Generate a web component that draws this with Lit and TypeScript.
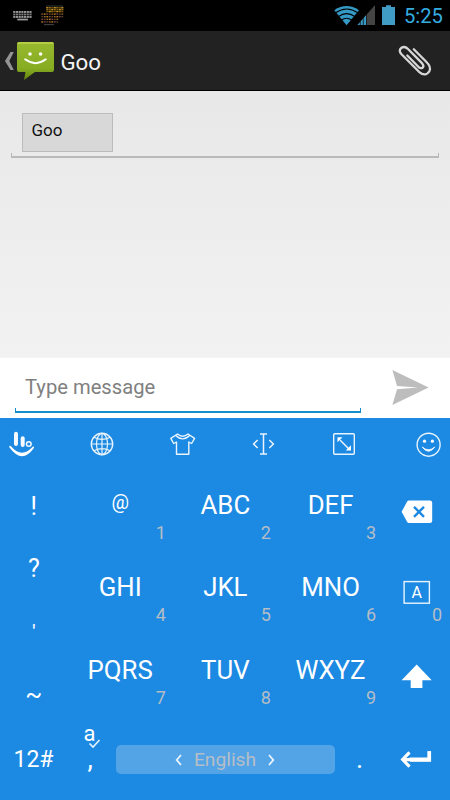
import { LitElement, html, svg, css } from "lit";
import { customElement } from "lit/decorators.js";

const KEYS = [
  ["@", "1"], ["ABC", "2"], ["DEF", "3"],
  ["GHI", "4"], ["JKL", "5"], ["MNO", "6"],
  ["PQRS", "7"], ["TUV", "8"], ["WXYZ", "9"],
];

@customElement("status-bar")
class StatusBar extends LitElement {
  static styles = css`
    :host { display: flex; height: 31px; background: #000; font-family: Roboto, sans-serif; }
    svg { display: block; flex: none; }
    .spacer { flex: 1; }
    .clock { width: 46px; font-size: 20.2px; line-height: 32px; color: #35ace0; }
  `;
  render() {
    const gold = ["#b98a1d", "#8d6912", "#6d5010"];
    const low = ["#8a5c2c", "#b5791b", "#74404a", "#5a3f18"];
    return html`
      <svg width="70" height="31" viewBox="0 0 70 31">
        ${[0, 1, 2].map((r) => Array.from({ length: 7 }, (_, i) =>
          svg`<rect x=${13.2 + i * 2.7} y=${11 + r * 2.5} width="2.2" height="1.9" fill=${r === 1 ? "#777" : "#969696"} />`))}
        <rect x="17.3" y="18.7" width="10.6" height="1.7" fill="#a0a0a0" />
        <rect x="46" y="5.6" width="17" height=".8" fill="#444" />
        ${[0, 1, 2].map((r) => Array.from({ length: 7 }, (_, i) =>
          svg`<rect x=${46.2 + i * 2.5} y=${7 + r * 1.9} width="2.2" height="1.5" fill=${gold[(r + i) % 3]} />`))}
        ${[0, 1, 2, 3].map((r) => Array.from({ length: r < 2 ? 9 : 7 }, (_, i) =>
          svg`<rect x=${41.4 + i * 2.5} y=${13.4 + r * 2.6} width="1.8" height="1.4" fill=${low[(r * 3 + i) % 4]} />`))}
        <rect x="44" y="24" width="10" height="1.2" fill="#3b3b3b" />
      </svg>
      <div class="spacer"></div>
      <svg width="70" height="31" viewBox="334 0 70 31">
        <path d="M334.3 10.2Q346.5 1.8 359 10.2L346.6 25.3z" fill="#3499c4" />
        <g fill="none" stroke="#000" stroke-width="1.1">
          <path d="M335.5 12.8Q346.6 5.2 357.8 12.8M338.5 16.5Q346.6 10.8 354.8 16.5M341.5 20Q346.6 16.4 351.7 20" />
        </g>
        <path d="M357.5 25L375 5V25z" fill="#444" />
        <path d="M357.5 25L366.3 15V25z" fill="#3499c4" />
        <path d="M360.3 20V25M363.3 17V25M366.5 14V25" stroke="#111" stroke-width=".8" />
        <path d="M382 7H386V5.2H391V7H395V25H382z" fill="#419cc5" />
      </svg>
      <div class="clock">5:25</div>
    `;
  }
}

@customElement("conversation-header")
class ConversationHeader extends LitElement {
  static styles = css`
    :host {
      display: flex; box-sizing: border-box; height: 60px; background: #222;
      border-bottom: 1px solid #000; font-family: Roboto, sans-serif;
    }
    svg { display: block; flex: none; }
    .title { flex: 1; font-size: 22.3px; line-height: 63.5px; color: #f3f3f3; }
  `;
  render() {
    return html`
      <svg width="60.4" height="59" viewBox="0 31 60.4 59">
        <defs>
          <linearGradient id="leaf" x1="0" y1="0" x2="0" y2="1">
            <stop offset="0" stop-color="#97b92e" />
            <stop offset=".7" stop-color="#87ac22" />
            <stop offset="1" stop-color="#62830e" />
          </linearGradient>
        </defs>
        <path d="M10.5 52H13.8L9.3 61L13.8 70H10.5L5 61z" fill="#949494" />
        <path d="M19 42H52Q54 42 54 44V70Q54 72 52 72H35L24 80L25.5 72H19Q17 72 17 70V44Q17 42 19 42z" fill="url(#leaf)" />
        <path d="M17.3 43.9V43.5Q17.5 42 19 42H52Q53.5 42 53.7 43.9z" fill="#b5cd42" />
        <circle cx="30" cy="54" r="1.8" fill="#fff" />
        <circle cx="40.6" cy="54" r="1.8" fill="#fff" />
        <path d="M25.2 59.3Q35.5 67 45.8 59.3" fill="none" stroke="#fff" stroke-width="2" stroke-linecap="round" />
      </svg>
      <div class="title">Goo</div>
      <svg width="60" height="59" viewBox="390 31 60 59">
        <path d="M413.8 49.2L426 61.5Q431.5 67 429.5 71Q425.5 77.5 419 71.8L401.5 54.3Q398.2 50.5 401.2 48Q404.6 45.6 408 49L422.2 63.4Q424.4 66 422.6 67.7Q420.8 69 418.4 66.8L407.3 55.5"
          fill="none" stroke="#d6d6d6" stroke-width="2.3" stroke-linecap="round" stroke-linejoin="round" />
      </svg>
    `;
  }
}

@customElement("compose-bar")
class ComposeBar extends LitElement {
  static styles = css`
    :host { display: flex; height: 60px; background: #fff; font-family: Roboto, sans-serif; }
    .field { position: relative; width: 346px; margin-left: 14.5px; box-sizing: border-box; height: 55px; padding-left: 10.5px;
      font-size: 20.2px; line-height: 59px; color: #808080; border-bottom: 2px solid #168ecb; }
    .field::after { content: ""; position: absolute; left: 0; right: 0; bottom: 0; height: 3px;
      border: solid #168ecb; border-width: 0 1.5px; }
    svg { display: block; margin-left: 29.5px; }
  `;
  render() {
    return html`
      <div class="field">Type message</div>
      <svg width="50" height="60" viewBox="390 358 50 60">
        <path d="M392.4 370L428.6 387.6L392.4 405L397 389.3L418 387.6L397 386z" fill="#bdbdbd" />
      </svg>
    `;
  }
}

@customElement("t9-keyboard")
class T9Keyboard extends LitElement {
  static styles = css`
    :host { display: block; height: 382px; background: #1c89e3; color: #fff; font-family: Roboto, sans-serif; }
    svg { display: block; fill: none; stroke: #e9f4fd; stroke-width: 1.4; }
    .tools { height: 51.5px; }
    .pad { display: grid; grid-template-columns: 67.6px 315px 1fr; height: 247.8px; }
    .marks { display: grid; grid-template-rows: repeat(4, 62px); font-size: 25px; text-align: center; }
    .mark { line-height: 73px; }
    .mark.tick { line-height: 77px; font-size: 21px; }
    .mark.tilde { line-height: 77px; }
    .letters { display: grid; grid-template: repeat(3, 82.6px) / repeat(3, 105.2px); }
    .key { display: flex; flex-direction: column; padding-top: 20px; }
    .label { font-size: 25.8px; line-height: 30px; text-align: center; }
    .label.at { font-size: 19.5px; line-height: 25px; height: 30px; }
    .digit { font-size: 18px; line-height: 26px; padding-right: 7px; text-align: right; color: #b4bdc6; }
    .actions { display: grid; grid-template-rows: repeat(3, 82.6px); }
    .action.zero { position: relative; }
    .action .digit { position: absolute; right: 1px; bottom: 6.6px; }
    .white { fill: #fff; stroke: none; }
    .boxed { fill: #fff; stroke: none; font: 16px Roboto, sans-serif; }
    .bottom { display: flex; height: 82.7px; }
    .mode { width: 67px; font-size: 23px; line-height: 86px; text-align: center; }
    .comma { width: 48.5px; display: flex; flex-direction: column; position: relative; }
    .auto { padding: 4px 0 0 16.5px; font-size: 22px; line-height: 26px; }
    .point { padding-left: 20.5px; font-size: 27px; line-height: 24px; }
    .check { position: absolute; left: 21px; top: 20.5px; }
    .space { display: flex; align-items: center; justify-content: center; gap: 11px; box-sizing: border-box; width: 219px; height: 29.5px; margin-top: 27.7px;
      border-radius: 5px; background: #53a4e6; color: #b6bec7; font-size: 19.2px; line-height: 31px; }
    .dot { width: 50px; text-align: center; font-size: 27px; line-height: 84px; }
  `;
  render() {
    return html`
      <div class="tools">
        <svg width="450" height="51" viewBox="0 418 450 51">
          <g stroke="#f4faff" stroke-linecap="round">
            <path d="M16 433.8V444" stroke-width="4" />
            <path d="M22.7 438.3V445" stroke-width="4" />
            <circle cx="28.8" cy="444" r="2.3" stroke-width="1.5" />
          </g>
          <path d="M9.3 447.2Q8.8 445.2 11 446.2Q21.5 459 33 446.4Q34.8 446.3 33.5 448.5Q22 464.5 9.3 447.2z" class="white" />
          <circle cx="102" cy="444" r="10.7" />
          <ellipse cx="102" cy="444" rx="5.5" ry="10.7" stroke-width="1.2" />
          <path d="M102 433.3V454.7M91.3 444H112.7M94 437.2Q102 441.5 110 437.2M94 450.8Q102 446.5 110 450.8" stroke-width="1.2" />
          <path d="M177.5 434L170.8 438.3L173.7 443.5L176.5 442V454.3H188.8V442L191.6 443.5L194.6 438.3L188 434Q182.7 438.5 177.5 434zM175.7 435.2Q182.7 442.5 189.7 435.2" stroke-linejoin="round" />
          <path d="M260 434H267M260 454H267M263.5 434V454M257.7 440L253.6 444L257.7 448M269.3 440L273.4 444L269.3 448" stroke-width="1.5" />
          <rect x="333.7" y="433.7" width="20.6" height="20.6" rx="1" />
          <path d="M340 440L348.5 448.5" stroke-width="1.5" />
          <path d="M337.5 437.3H342.5L337.5 442.3zM351 450.5H345.7L351 445.3z" class="white" />
          <circle cx="428.6" cy="444.7" r="11.5" />
          <circle cx="424.5" cy="441.2" r="1.6" class="white" />
          <circle cx="432.4" cy="441.2" r="1.6" class="white" />
          <path d="M422.2 447Q428.5 455.5 434.8 447Q428.5 452.5 422.2 447z" fill="#fff" stroke-width=".9" />
        </svg>
      </div>
      <div class="pad">
        <div class="marks">
          <div class="mark">!</div>
          <div class="mark">?</div>
          <div class="mark tick">'</div>
          <div class="mark tilde">~</div>
        </div>
        <div class="letters">
          ${KEYS.map(([label, digit]) => html`
            <div class="key">
              <div class="label ${label === "@" ? "at" : ""}">${label}</div>
              <div class="digit">${digit}</div>
            </div>`)}
        </div>
        <div class="actions">
          <div class="action">
            <svg width="67" height="82" viewBox="382.6 469.5 67 82">
              <path d="M408.5 500H429.5Q431.8 500 431.8 502.3V520.3Q431.8 522.6 429.5 522.6H408.5Q407.5 522.6 406.8 521.5L401.2 511.3L406.8 501Q407.5 500 408.5 500z" class="white" />
              <path d="M413.6 506.3L423.6 516.3M423.6 506.3L413.6 516.3" stroke="#1c89e3" stroke-width="2.4" />
            </svg>
          </div>
          <div class="action zero">
            <svg width="67" height="82" viewBox="382.6 552.1 67 82">
              <rect x="403.7" y="581.7" width="25.3" height="21.6" />
              <text x="416.3" y="598.2" text-anchor="middle" class="boxed">A</text>
            </svg>
            <div class="digit">0</div>
          </div>
          <div class="action">
            <svg width="67" height="82" viewBox="382.6 634.7 67 82">
              <path d="M416.3 664.3L431.3 680H422V687.8H410.3V680H401.2z" class="white" />
            </svg>
          </div>
        </div>
      </div>
      <div class="bottom">
        <div class="mode">12#</div>
        <div class="comma">
          <div class="auto">a</div>
          <div class="point">,</div>
          <svg class="check" width="14" height="12"><path d="M1.5 5.5L5 9L11.5 2" stroke-width="1.6" /></svg>
        </div>
        <div class="space">
          <svg width="8" height="14"><path d="M6 2L1.7 7L6 12" stroke-width="1.8" /></svg>
          <span>English</span>
          <svg width="8" height="14"><path d="M2 2L6.3 7L2 12" stroke-width="1.8" /></svg>
        </div>
        <div class="dot">.</div>
        <svg width="65" height="82" viewBox="384.5 717.3 65 82">
          <path d="M430.6 751.5H427V757.8H409.5L409 758L409.5 762H430.6z" class="white" />
          <path d="M428.8 751.5V760H402.5M409 752.7L402.2 759.8L409 767" stroke="#fff" stroke-width="3.2" />
        </svg>
      </div>
    `;
  }
}

@customElement("app-root")
class AppRoot extends LitElement {
  static styles = css`
    :host { display: flex; flex-direction: column; height: 800px; overflow: hidden; font-family: Roboto, sans-serif; }
    .thread { flex: 1; background: linear-gradient(#e8e8e8, #f2f2f2); border-bottom: 1px solid #f5f5f5; box-sizing: border-box; }
    .recipients { position: relative; box-sizing: border-box; height: 66.5px; margin: 0 11px; padding: 22px 0 0 10.5px; border-bottom: 2px solid #bababa; }
    .recipients::after { content: ""; position: absolute; left: 0; right: 0; bottom: 0; height: 3px; border: solid #b6b6b6; border-width: 0 1px; }
    .chip { box-sizing: border-box; width: 91px; height: 39px; padding-left: 9px; border: 1px solid #bcbcbc; border-bottom-width: 1.5px;
      background: #d8d8d8; color: #111; font-size: 17px; line-height: 32px; }
  `;
  render() {
    return html`
      <status-bar></status-bar>
      <conversation-header></conversation-header>
      <div class="thread">
        <div class="recipients"><div class="chip">Goo</div></div>
      </div>
      <compose-bar></compose-bar>
      <t9-keyboard></t9-keyboard>
    `;
  }
}
